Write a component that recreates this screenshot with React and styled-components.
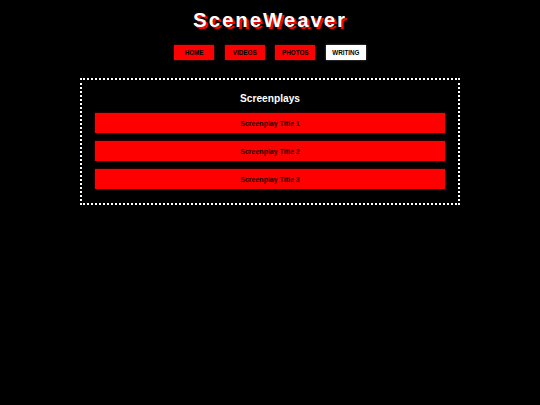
import React from "react";
import styled, { createGlobalStyle } from "styled-components";

const GlobalStyle = createGlobalStyle`
  html, body {
    margin: 0;
    background: #000;
    font-family: "Liberation Sans", Arial, sans-serif;
  }
`;

const Page = styled.div`
  width: 540px;
  min-height: 405px;
  background: #000;
  display: flex;
  flex-direction: column;
  align-items: center;
`;

const Title = styled.h1`
  margin: 8px 0 0;
  font-size: 20.5px;
  line-height: 24px;
  font-weight: 700;
  letter-spacing: 1.9px;
  color: #fff;
  text-shadow: 2px 2px 0 #f00;
`;

const Nav = styled.nav`
  display: flex;
  gap: 10.6px;
  margin-top: 13px;
`;

const NavButton = styled.a`
  width: 40px;
  height: 15px;
  display: flex;
  align-items: center;
  justify-content: center;
  font-size: 6.3px;
  font-weight: 700;
  color: #000;
  background: ${(p) => (p.$active ? "#fff" : "#f00")};
  box-shadow: 0 0 2px ${(p) => (p.$active ? "rgba(255,255,255,0.4)" : "rgba(255,0,0,0.5)")};
  cursor: pointer;
`;

const Panel = styled.section`
  box-sizing: border-box;
  width: 380px;
  margin-top: 18px;
  border: 2px dotted #fff;
  padding: 11px 13px 14px;
  display: flex;
  flex-direction: column;
  gap: 8px;
`;

const Heading = styled.h2`
  margin: 0 0 -2px;
  text-align: center;
  font-size: 10.2px;
  line-height: 16px;
  font-weight: 700;
  color: #fff;
`;

const Item = styled.div`
  height: 20px;
  display: flex;
  align-items: center;
  justify-content: center;
  background: #f00;
  font-size: 7px;
  font-weight: 700;
  color: #200;
  box-shadow: 0 0 2px rgba(255, 0, 0, 0.5);
`;

const links = ["HOME", "VIDEOS", "PHOTOS", "WRITING"];
const titles = ["Screenplay Title 1", "Screenplay Title 2", "Screenplay Title 3"];

export default function App() {
  return (
    <>
      <GlobalStyle />
      <Page>
        <Title>SceneWeaver</Title>
        <Nav>
          {links.map((l) => (
            <NavButton key={l} $active={l === "WRITING"}>
              {l}
            </NavButton>
          ))}
        </Nav>
        <Panel>
          <Heading>Screenplays</Heading>
          {titles.map((t) => (
            <Item key={t}>{t}</Item>
          ))}
        </Panel>
      </Page>
    </>
  );
}
